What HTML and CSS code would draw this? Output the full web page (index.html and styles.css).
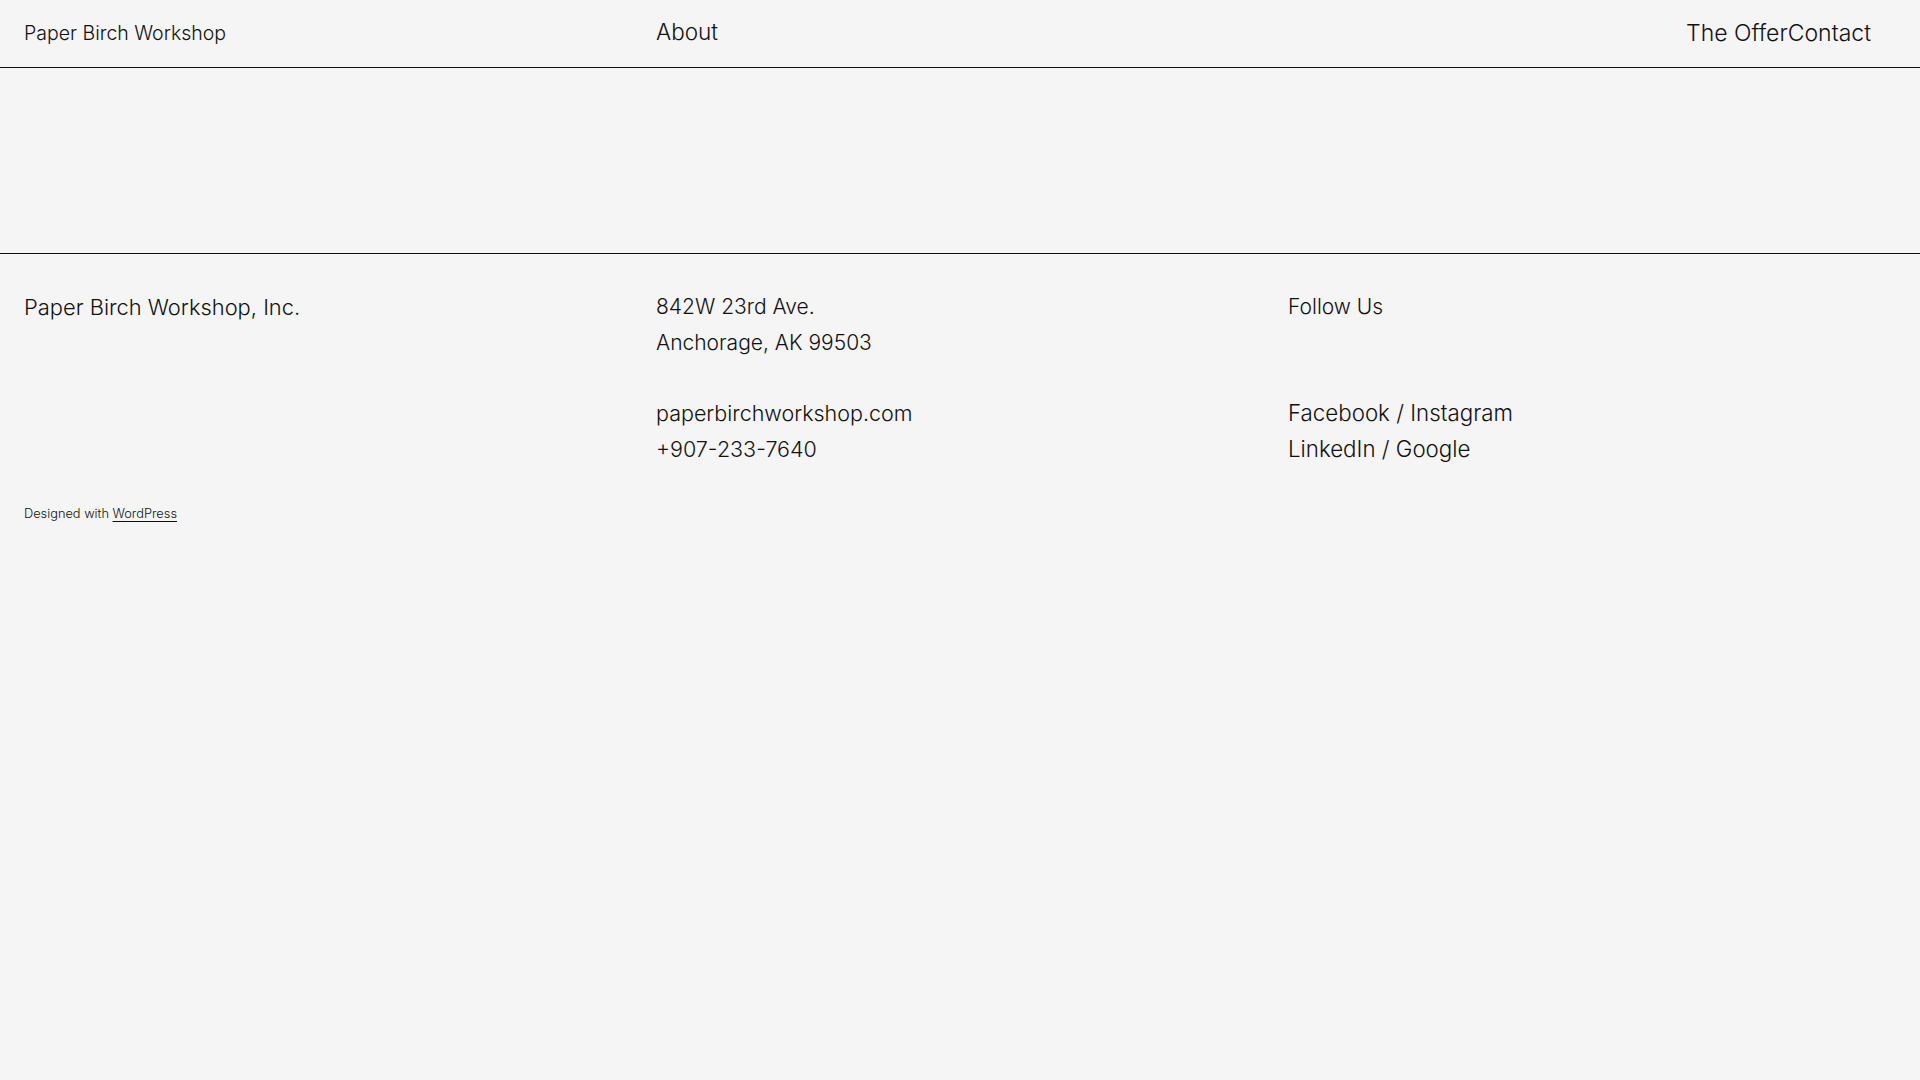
FILE: index.html
```html
<!DOCTYPE html>
<html lang="en">
<head>
<meta charset="utf-8">
<title>Paper Birch Workshop</title>
<link rel="stylesheet" href="styles.css">
</head>
<body>
<header class="site-header">
  <div class="col"><a class="site-title" href="#">Paper Birch Workshop</a></div>
  <div class="col"><a class="nav-link" href="#">About</a></div>
  <nav class="col nav-right"><a class="nav-link wide" href="#">The Offer</a><a class="nav-link wide" href="#">Contact</a></nav>
</header>
<main class="site-main"></main>
<footer class="site-footer">
  <div class="footer-grid">
    <div class="col">
      <p class="company">Paper Birch Workshop, Inc.</p>
    </div>
    <div class="col">
      <p>842W 23rd Ave.<br>Anchorage, AK 99503</p>
      <p class="para-gap contact">paperbirchworkshop.com<br>+907-233-7640</p>
    </div>
    <div class="col">
      <p>Follow Us</p>
      <p class="para-gap2 social">Facebook / Instagram<br>LinkedIn / Google</p>
    </div>
  </div>
  <p class="credit">Designed with <a href="#">WordPress</a></p>
</footer>
</body>
</html>
```

FILE: styles.css
```css
html, body {
  margin: 0;
  padding: 0;
}
body {
  background: #f5f5f5;
  color: #111;
  font-family: "Inter", "Noto Sans", sans-serif;
  font-weight: 300;
  font-size: 21px;
  line-height: 36px;
  min-height: 1080px;
}
a {
  color: inherit;
  text-decoration: none;
}
p {
  margin: 0;
}
.site-header {
  display: grid;
  grid-template-columns: repeat(3, 1fr);
  column-gap: 24px;
  padding: 0 24px;
  height: 67px;
  align-items: center;
  border-bottom: 1px solid #111;
  box-sizing: content-box;
}
.site-header .col {
  padding-bottom: 2px;
}
.site-title {
  font-size: 19.5px;
}
.nav-link {
  font-size: 22.5px;
}
.nav-link.wide {
  font-size: 23px;
}
.nav-right {
  display: flex;
  justify-content: flex-end;
  padding-right: 25px;
}
.site-main {
  height: 185px;
}
.site-footer {
  border-top: 1px solid #111;
  padding: 35px 24px 0;
}
.footer-grid {
  display: grid;
  grid-template-columns: repeat(3, 1fr);
  column-gap: 24px;
}
.company {
  font-size: 21.9px;
}
.contact {
  font-size: 21.5px;
}
.social {
  font-size: 22.3px;
}
.para-gap {
  margin-top: 34px;
}
.para-gap2 {
  margin-top: 70px;
}
.credit {
  margin-top: 38px;
  font-size: 12.8px;
  line-height: 18px;
}
.credit a {
  text-decoration: underline;
  text-underline-offset: 3px;
}
```
